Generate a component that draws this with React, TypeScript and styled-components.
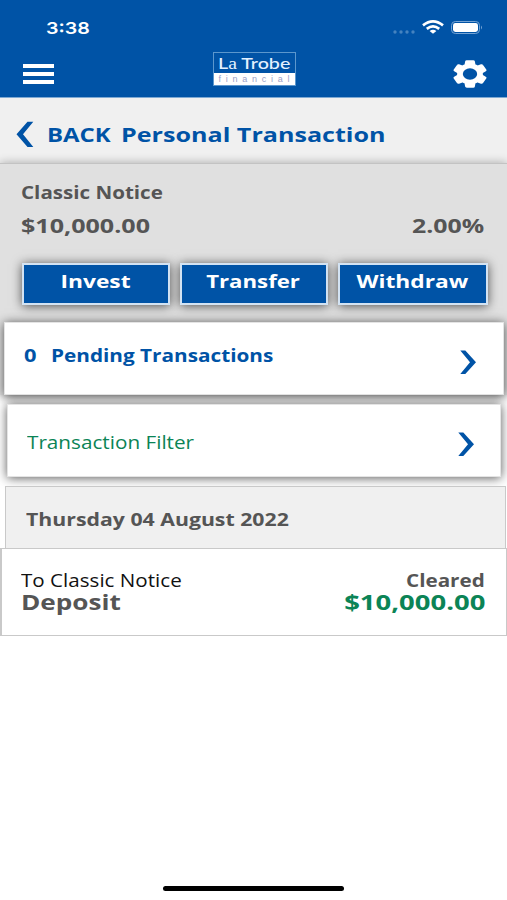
import React from 'react';
import styled, { createGlobalStyle } from 'styled-components';

const BLUE = '#0053a6';
const GREY = '#555555';
const GREEN = '#0b8456';
const SANS = '"Open Sans", "Noto Sans", sans-serif';

const GlobalStyle = createGlobalStyle`
  *, *::before, *::after { box-sizing: border-box; }
  body { margin: 0; background: #fff; font-family: ${SANS}; }
`;

const Screen = styled.div`
  display: flex;
  flex-direction: column;
  width: 100%;
  max-width: 507px;
  height: 900px;
  overflow: hidden;
  background: #fff;
`;

/* Wide-set lettering: text is stretched horizontally from its anchored side. */
const Text = styled.span<{
  $size: number;
  $wide: number;
  $color?: string;
  $weight?: number;
  $from?: 'left' | 'center' | 'right';
  $line?: number;
}>`
  display: block;
  white-space: nowrap;
  font-size: ${p => p.$size}px;
  line-height: ${p => p.$line ?? 24}px;
  font-weight: ${p => p.$weight ?? 700};
  color: ${p => p.$color ?? GREY};
  transform: scaleX(${p => p.$wide});
  transform-origin: ${p => p.$from ?? 'left'} center;
`;

const TopBar = styled.header`
  flex: none;
  height: 98px;
  background: ${BLUE};
  border-bottom: 1px solid #7ea9d3;
`;

const StatusBar = styled.div`
  display: flex;
  align-items: center;
  justify-content: space-between;
  height: 50px;
  padding: 5px 24px 0 46px;
`;

const Clock = styled(Text)`
  font-family: Inter, sans-serif;
`;

const StatusIcons = styled.div`
  display: flex;
  align-items: center;
`;

const NavBar = styled.div`
  display: grid;
  grid-template-columns: 1fr auto 1fr;
  align-items: center;
  height: 47px;
  padding: 0 20px 0 23px;
`;

const MenuButton = styled.button`
  display: flex;
  flex-direction: column;
  gap: 4px;
  width: 31px;
  margin-top: 1px;
  padding: 0;
  border: 0;
  background: none;
`;

const MenuLine = styled.i`
  height: 4px;
  background: #fff;
`;

const SettingsButton = styled.button`
  display: flex;
  justify-self: end;
  padding: 0;
  border: 0;
  background: none;
`;

const Logo = styled.div`
  width: 83px;
  height: 34px;
  margin: -10px 2px 0 0;
  border: 1px solid #5c97cd;
  background: ${BLUE};
`;

const LogoName = styled.div`
  height: 20px;
  padding-left: 4px;
  font: 500 16px/20px Lato, sans-serif;
  white-space: nowrap;
  color: #e4f1ff;
`;

const LogoStretch = styled.span`
  display: inline-block;
  transform: scaleX(1.23);
  transform-origin: left;
`;

const LogoSerif = styled.span`
  font-family: "Liberation Serif", serif;
`;

const LogoTag = styled.div`
  display: flex;
  justify-content: space-between;
  height: 12px;
  padding: 0 5px;
  background: #fff;
  font: 9px/12px "Liberation Sans", sans-serif;
  color: #9a9fc8;
`;

const TitleBar = styled.div`
  display: flex;
  flex: none;
  align-items: center;
  height: 65px;
  padding: 8px 0 0 16px;
  background: #f0f0f0;
`;

const BackLink = styled.div`
  display: flex;
  align-items: center;
  gap: 13px;
  width: 105px;
`;

const Account = styled.section`
  flex: none;
  height: 232px;
  padding: 16px 19px 0 22px;
  border-top: 1px solid #c3c3c3;
  background: #e0e0e0;
  box-shadow: 0 0 9px rgba(0, 0, 0, 0.3);
`;

const AccountText = styled.div`
  margin: 0 4px 0 -1px;
`;

const Spread = styled.div<{ $top?: number }>`
  display: flex;
  justify-content: space-between;
  margin-top: ${p => p.$top ?? 0}px;
`;

const Actions = styled.div`
  display: grid;
  grid-template-columns: 148px 148px 150px;
  justify-content: space-between;
  margin-top: 25px;
`;

const ActionButton = styled.button`
  display: flex;
  justify-content: center;
  height: 42px;
  padding: 4px 2px 0 0;
  border: 2px solid #d3e3f3;
  background: ${BLUE};
  box-shadow: 0 1px 10px rgba(0, 0, 0, 0.65);
  font-family: inherit;
`;

const Cards = styled.div`
  display: flex;
  flex: none;
  flex-direction: column;
  gap: 9px;
  margin-top: -73px;
  padding: 0 3px 0 4px;
`;

const Card = styled.div<{ $inset?: boolean }>`
  display: flex;
  justify-content: space-between;
  height: 73px;
  margin: ${p => (p.$inset ? '0 3px 0 3px' : '0')};
  padding: ${p => (p.$inset ? '25px 26px 0 19px' : '20px 27px 0 19px')};
  border: 1px solid #e4e4e4;
  background: #fff;
  box-shadow: 0 1px 10px rgba(0, 0, 0, 0.65);
`;

const CardLabel = styled.div`
  display: grid;
  grid-template-columns: 27px auto;
`;

const Chevron = styled.svg<{ $top: number }>`
  margin-top: ${p => p.$top}px;
`;

const DateRow = styled.div`
  flex: none;
  height: 62px;
  margin: 9px 1px 0 5px;
  padding: 20px 20px 0;
  border: 1px solid #c9c9c9;
  border-bottom: 0;
  background: #f0f0f0;
`;

const Entry = styled.div`
  flex: none;
  height: 88px;
  padding: 21px 21px 0 19px;
  border: 1px solid #c9c9c9;
  border-left-width: 2px;
  background: #fff;
`;

const HomeIndicator = styled.div`
  flex: none;
  width: 181px;
  height: 5px;
  margin: auto auto 9px 163px;
  border-radius: 3px;
  background: #000;
`;

const Arrow = ({ top }: { top: number }) => (
  <Chevron $top={top} width="16" height="25" viewBox="0 0 16 25">
    <path d="M0.3 0.5H5.3L16 12.3 5.3 24H0.3L10 12.3Z" fill={BLUE} />
  </Chevron>
);

export default function App() {
  return (
    <Screen>
      <GlobalStyle />
      <TopBar>
        <StatusBar>
          <Clock $size={16.5} $wide={1.19} $weight={600} $color="#fff">3:38</Clock>
          <StatusIcons>
            <svg width="91" height="20" viewBox="0 0 91 20">
              <g fill="#4583c0">
                <circle cx="3" cy="14" r="1.7" />
                <circle cx="9" cy="14" r="1.7" />
                <circle cx="15" cy="14" r="1.7" />
                <circle cx="21" cy="14" r="1.7" />
              </g>
              <g fill="none" stroke="#fff" strokeWidth="2.7">
                <path d="M31 7.4Q41 -0.8 51 7.4" />
                <path d="M34.8 10.9Q41 5.9 47.2 10.9" />
              </g>
              <path d="M37.6 13Q41 10.4 44.4 13L41 15.8Z" fill="#fff" />
              <rect x="59.5" y="3.5" width="28" height="12" rx="3.8" fill="none" stroke="#75a3d3" />
              <rect x="61" y="5" width="25" height="9" rx="2.4" fill="#fff" />
              <path d="M89 7.5Q91 9.5 89 11.5Z" fill="#75a3d3" />
            </svg>
          </StatusIcons>
        </StatusBar>
        <NavBar>
          <MenuButton aria-label="Menu">
            <MenuLine /><MenuLine /><MenuLine />
          </MenuButton>
          <Logo>
            <LogoName><LogoStretch>L<LogoSerif>a</LogoSerif> Trobe</LogoStretch></LogoName>
            <LogoTag>{'financial'.split('').map((c, i) => <span key={i}>{c}</span>)}</LogoTag>
          </Logo>
          <SettingsButton aria-label="Settings">
            <svg width="34" height="28" viewBox="1.8 1.6 20.4 20.8" preserveAspectRatio="none">
              <path fill="#fff" stroke="#fff" strokeWidth="1.1" strokeLinejoin="round" d="M19.14 12.94c.04-.3.06-.61.06-.94 0-.32-.02-.64-.07-.94l2.03-1.58c.18-.14.23-.41.12-.61l-1.92-3.32c-.12-.22-.37-.29-.59-.22l-2.39.96c-.5-.38-1.03-.7-1.62-.94l-.36-2.54c-.04-.24-.24-.41-.48-.41h-3.84c-.24 0-.43.17-.47.41l-.36 2.54c-.59.24-1.13.57-1.62.94l-2.39-.96c-.22-.08-.47 0-.59.22L2.74 8.87c-.12.21-.08.47.12.61l2.03 1.58c-.05.3-.09.63-.09.94s.02.64.07.94l-2.03 1.58c-.18.14-.23.41-.12.61l1.92 3.32c.12.22.37.29.59.22l2.39-.96c.5.38 1.03.7 1.62.94l.36 2.54c.05.24.24.41.48.41h3.84c.24 0 .44-.17.47-.41l.36-2.54c.59-.24 1.13-.56 1.62-.94l2.39.96c.22.08.47 0 .59-.22l1.92-3.32c.12-.22.07-.47-.12-.61l-2.01-1.58z" />
              <circle cx="12" cy="12" r="4.3" fill={BLUE} />
            </svg>
          </SettingsButton>
        </NavBar>
      </TopBar>

      <TitleBar>
        <BackLink>
          <svg width="18" height="27" viewBox="0 0 18 27">
            <path d="M17.3 0.8H11.5L0.5 13.2 11.5 26H17.3L7 13.2Z" fill={BLUE} />
          </svg>
          <Text $size={19} $wide={1.26} $color={BLUE}>BACK</Text>
        </BackLink>
        <Text $size={20} $wide={1.255} $color={BLUE}>Personal Transaction</Text>
      </TitleBar>

      <Account>
        <AccountText>
          <Text $size={17.5} $wide={1.175}>Classic Notice</Text>
          <Spread $top={10}>
            <Text $size={19} $wide={1.32}>$10,000.00</Text>
            <Text $size={19} $wide={1.31} $from="right">2.00%</Text>
          </Spread>
        </AccountText>
        <Actions>
          <ActionButton><Text $size={18.5} $wide={1.23} $color="#fff" $from="center">Invest</Text></ActionButton>
          <ActionButton><Text $size={18.5} $wide={1.2} $color="#fff" $from="center">Transfer</Text></ActionButton>
          <ActionButton><Text $size={18.5} $wide={1.23} $color="#fff" $from="center">Withdraw</Text></ActionButton>
        </Actions>
      </Account>

      <Cards>
        <Card>
          <CardLabel>
            <Text $size={17.5} $wide={1.25} $color={BLUE}>0</Text>
            <Text $size={17.5} $wide={1.185} $color={BLUE}>Pending Transactions</Text>
          </CardLabel>
          <Arrow top={7} />
        </Card>
        <Card $inset>
          <Text $size={18} $wide={1.15} $color={GREEN} $weight={400}>Transaction Filter</Text>
          <Arrow top={2} />
        </Card>
      </Cards>

      <DateRow>
        <Text $size={17.5} $wide={1.215}>Thursday 04 August 2022</Text>
      </DateRow>
      <Entry>
        <Spread>
          <Text $size={18} $wide={1.145} $line={21} $color="#111" $weight={400}>To Classic Notice</Text>
          <Text $size={17.5} $wide={1.18} $line={21} $from="right">Cleared</Text>
        </Spread>
        <Spread>
          <Text $size={20.5} $wide={1.275} $line={22}>Deposit</Text>
          <Text $size={20.5} $wide={1.34} $line={22} $color={GREEN} $from="right">$10,000.00</Text>
        </Spread>
      </Entry>
      <HomeIndicator />
    </Screen>
  );
}
